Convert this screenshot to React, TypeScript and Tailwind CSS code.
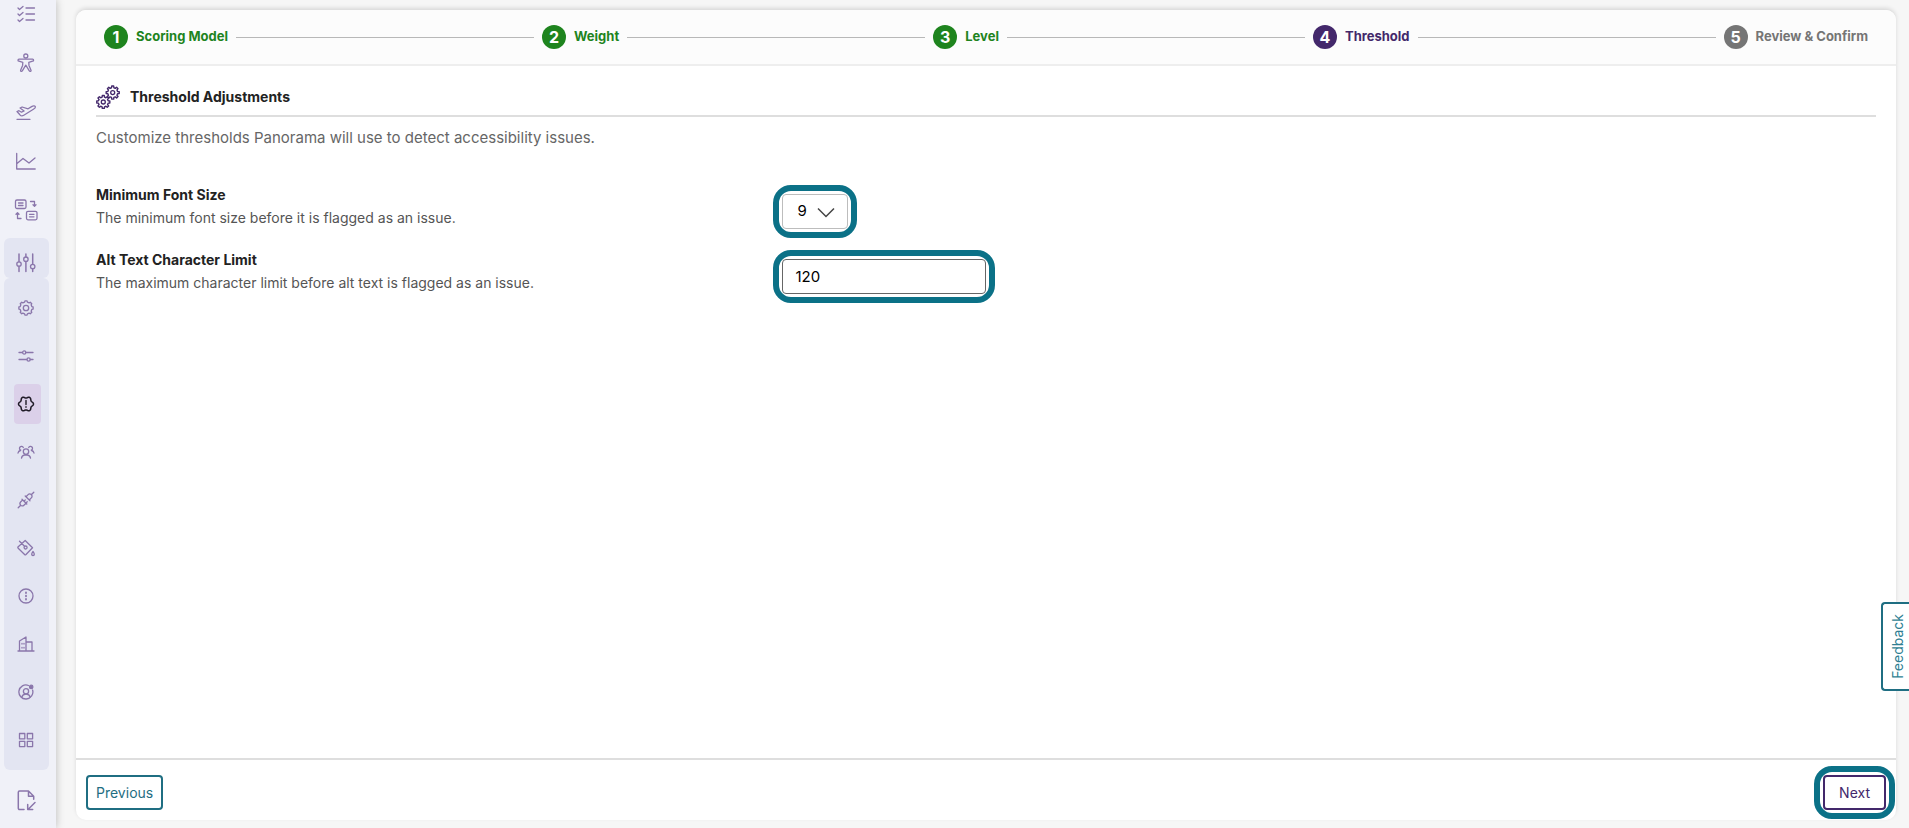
import React, { useState } from 'react';
import clsx from 'clsx';

interface IconProps {
  className?: string;
}

const Icon: React.FC<{ size: number; children: React.ReactNode; className?: string }> = ({ size, children, className }) => (
  <svg
    width={size}
    height={size}
    viewBox={`0 0 ${size} ${size}`}
    fill="none"
    stroke="currentColor"
    strokeWidth={1.3}
    strokeLinecap="round"
    strokeLinejoin="round"
    className={className}
    aria-hidden="true"
  >
    {children}
  </svg>
);

// cog outline with square teeth around (cx, cy)
const cogPath = (cx: number, cy: number, outer: number, inner: number, teeth = 8) => {
  const step = (Math.PI * 2) / teeth;
  const points: string[] = [];
  for (let i = 0; i < teeth; i++) {
    const a = i * step - Math.PI / 2;
    [
      [inner, -0.3],
      [outer, -0.19],
      [outer, 0.19],
      [inner, 0.3],
    ].forEach(([r, o]) => {
      points.push(`${(cx + r * Math.cos(a + o * step)).toFixed(2)} ${(cy + r * Math.sin(a + o * step)).toFixed(2)}`);
    });
  }
  return `M${points.join('L')}Z`;
};

// soft-lobed outline, first lobe pointing right
const lobePath = (c: number, radius: number, depth: number, lobes: number) => {
  const points: string[] = [];
  for (let deg = 0; deg < 360; deg += 5) {
    const a = (deg * Math.PI) / 180;
    const r = radius + depth * Math.cos(lobes * a);
    points.push(`${(c + r * Math.cos(a)).toFixed(2)} ${(c + r * Math.sin(a)).toFixed(2)}`);
  }
  return `M${points.join('L')}Z`;
};

const IconChecklist = () => (
  <Icon size={24}>
    <path d="M4 6l1.5 1.5L9 4.5M4 12l1.5 1.5L9 10.5M4 18l1.5 1.5L9 16.5M12 6h8.5M12 12h8.5M12 18h8.5" />
  </Icon>
);

const IconAccessibility = () => (
  <Icon size={24}>
    <circle cx="11.8" cy="5" r="2" />
    <path d="M9.5 8.200H5a1 1 0 0 0 0 2l3.800 1.200-.2 3-2 4.800c-.4 1.200 1.200 1.700 1.700.6l3.500-5.600 3.500 5.600c.5 1.100 2.100.6 1.700-.6l-2-4.800-.2-3 3.800-1.200a1 1 0 0 0 0-2z" />
  </Icon>
);

const IconPlane = () => (
  <Icon size={24}>
    <path d="M3 19.300h13M3 11.500l2-.8 2.500 1.500 2.600-1.200-4-3 2-1 6 1.800 3.500-2.200c2-1.200 3.600-.7 3.800.2.200 1-.7 1.700-2 2.500l-9.600 6c-1.500.9-2.900.7-3.900-.5z" />
  </Icon>
);

const IconChart = () => (
  <Icon size={24}>
    <path d="M2.700 4.500V20h18.500M3 14.500l6-5 6 4.500 6-5" />
  </Icon>
);

const IconSwap = () => (
  <Icon size={24}>
    <rect x="1.500" y="2" width="10.500" height="8.500" rx="1.500" />
    <rect x="12.500" y="13.300" width="10.500" height="8.500" rx="1.500" />
    <path d="M4.500 5h4.500M4.500 7.500h4.500M15.500 16.300H20M15.500 18.800H20M16.500 3.500h4v4.500M19 6.800l1.500 1.500L22 6.800M7 20.500H3.500V15M2 16.300l1.500-1.500L5 16.300" />
  </Icon>
);

const IconSliders = () => (
  <Icon size={24}>
    <path d="M5 3v7.500M5 15.500V20.500M11.900 3v2.500M11.900 10.500v10M18.700 3v10M18.700 18v2.500" strokeWidth={1.5} />
    <circle cx="5" cy="13" r="2.200" />
    <circle cx="11.900" cy="8.200" r="2.200" />
    <circle cx="18.700" cy="15.500" r="2.200" />
  </Icon>
);

const IconGear = () => (
  <Icon size={16}>
    <path d={cogPath(8, 8, 7.2, 6)} />
    <circle cx="8" cy="8" r="2.700" />
  </Icon>
);

const IconTune = () => (
  <Icon size={16}>
    <path d="M1 4.500h3.500M7.800 4.500H15M1 11.500h7.800M12.300 11.500H15" />
    <circle cx="6.200" cy="4.500" r="1.600" />
    <circle cx="10.600" cy="11.500" r="1.600" />
  </Icon>
);

const IconBadgeAlert = () => (
  <Icon size={18}>
    <path d={lobePath(9, 6.7, 0.8, 6)} strokeWidth={1.5} />
    <path d="M9 5.500v4M9 11.800v.4" strokeWidth={1.4} />
  </Icon>
);

const IconUsers = () => (
  <Icon size={18}>
    <circle cx="9" cy="8.600" r="2.700" />
    <path d="M4.500 15.200c.3-2 1.500-3 3-3.200h3c1.500.2 2.700 1.200 3 3.200M6.300 4.500a2 2 0 1 0-2.600 2.700M3.500 7.500C2 7.800 1.200 8.800 1 10M11.700 4.500a2 2 0 1 1 2.600 2.700M14.500 7.500c1.500.3 2.300 1.300 2.500 2.500" />
  </Icon>
);

const IconPlug = () => (
  <Icon size={18}>
    <path d="M1.200 16.800l2.500-2.500M16.800 1.200l-2.500 2.500M5 8.200l4.800 4.800M8.200 5l4.800 4.800M5.700 8.900L3.600 11c-1 1-.8 2.200 0 3.200s2.300 1 3.300 0L9 12.300M9 5.700l2.100-2.100c1-1 2.200-.8 3.200 0s1 2.300 0 3.300L12.300 9M7 10.200l1.300-1.300M9 12l1.200-1.200" />
  </Icon>
);

const IconPaint = () => (
  <Icon size={18}>
    <path d="M8.200 1.500l7.300 7.200-6.500 6.800a1 1 0 0 1-1.400 0L1.200 9.200a1 1 0 0 1 0-1.400zM2.500 2.300l5 5" />
    <circle cx="8.600" cy="8.500" r="1.500" />
    <path d="M16 12.500c-.8 1.200-1.300 1.900-1.300 2.700a1.300 1.300 0 0 0 2.600 0c0-.8-.5-1.500-1.300-2.700z" />
  </Icon>
);

const IconInfo = () => (
  <Icon size={16}>
    <circle cx="8" cy="8" r="7" />
    <path d="M8 4.500v.6M8 7.700v.6M8 10.900v.6" strokeWidth={1.8} />
  </Icon>
);

const IconBuilding = () => (
  <Icon size={18}>
    <path d="M1 16h16M2.500 16V6l6.500-4v14M9 7h6v9M5 8.500v.5M7 8.500v.5M5 12.500v.5M7 12.500v.5" />
  </Icon>
);

const IconUserCircle = () => (
  <Icon size={16}>
    <path d="M10.500 1.500A7 7 0 1 0 14.600 6" />
    <circle cx="8" cy="7.200" r="2.600" />
    <path d="M3.700 13.200c.6-2 2.200-3 4.300-3s3.700 1 4.300 3" />
    <circle cx="13.200" cy="2.900" r="1.700" fill="currentColor" />
  </Icon>
);

const IconGrid = () => (
  <Icon size={16}>
    <rect x="1.500" y="1.500" width="5.300" height="5.300" />
    <rect x="9.300" y="1.500" width="5.300" height="5.300" />
    <rect x="1.500" y="9.300" width="5.300" height="5.300" />
    <rect x="9.300" y="9.300" width="5.300" height="5.300" />
  </Icon>
);

const IconFileImport = () => (
  <Icon size={24}>
    <path d="M10 21.500H5.500a1.200 1.200 0 0 1-1.200-1.200V4.200A1.200 1.200 0 0 1 5.500 3h9l5.200 5.200v3M14.500 3v5.200h5.200M21 14.500l-7 7M13.700 16.500v5h5" strokeWidth={1.5} />
  </Icon>
);

const IconGears = ({ className }: IconProps) => (
  <Icon size={24} className={className}>
    <path d={cogPath(16.7, 7.6, 6.6, 5)} strokeWidth={1.4} />
    <circle cx="16.700" cy="7.600" r="2" />
    <path d={cogPath(7.3, 17, 6.6, 5)} strokeWidth={1.4} />
    <circle cx="7.300" cy="17" r="2" />
  </Icon>
);

const mainLinks = [
  { label: 'Checklist', icon: IconChecklist },
  { label: 'Accessibility', icon: IconAccessibility },
  { label: 'Launch', icon: IconPlane },
  { label: 'Reports', icon: IconChart },
  { label: 'Transfers', icon: IconSwap },
];

const settingsLinks = [
  { label: 'General', icon: IconGear },
  { label: 'Options', icon: IconTune },
  { label: 'Issue rules', icon: IconBadgeAlert, active: true },
  { label: 'Users', icon: IconUsers },
  { label: 'Integrations', icon: IconPlug },
  { label: 'Branding', icon: IconPaint },
  { label: 'Information', icon: IconInfo },
  { label: 'Organization', icon: IconBuilding },
  { label: 'Account', icon: IconUserCircle },
  { label: 'Apps', icon: IconGrid },
];

const Sidebar: React.FC = () => (
  <nav
    aria-label="Main"
    className="w-14 shrink-0 flex flex-col justify-end overflow-hidden bg-[#f0f1f8] text-[#8a76ab] shadow-[0_0_8px_rgba(0,0,0,0.25)] pl-1 pr-[7px]"
  >
    {mainLinks.map(({ label, icon: LinkIcon }) => (
      <a key={label} href="#" aria-label={label} className="h-[49px] shrink-0 flex items-center justify-center pr-px">
        <LinkIcon />
      </a>
    ))}
    <a href="#" aria-label="Settings" className="mt-1 h-10 shrink-0 flex items-center justify-center rounded-md bg-[#e3e5f2] pt-[10px] pr-px">
      <IconSliders />
    </a>
    <div className="shrink-0 flex flex-col items-center gap-2 rounded-md bg-[#e3e5f2] py-[10px] pl-[2px]">
      {settingsLinks.map(({ label, icon: LinkIcon, active }) => (
        <a
          key={label}
          href="#"
          aria-label={label}
          className={clsx('w-[27px] h-10 flex items-center justify-center rounded pr-[3px]', active && 'bg-[#dbd0e9] text-[#1f1a26]')}
        >
          <LinkIcon />
        </a>
      ))}
    </div>
    <a href="#" aria-label="Import" className="h-[58px] shrink-0 flex items-center justify-center pt-[2px] pr-px">
      <IconFileImport />
    </a>
  </nav>
);

const steps = [
  { label: 'Scoring Model', state: 'done' },
  { label: 'Weight', state: 'done' },
  { label: 'Level', state: 'done' },
  { label: 'Threshold', state: 'current' },
  { label: 'Review & Confirm', state: 'todo' },
];

const Stepper: React.FC = () => (
  <ol className="flex items-center gap-2 h-14 px-7 bg-[#fcfcfc] border-b-2 border-[#eeeeee] rounded-t-[10px]">
    {steps.map((step, i) => (
      <React.Fragment key={step.label}>
        {i > 0 && <li aria-hidden="true" className="flex-1 h-px bg-[#b8b8b8]" />}
        <li
          className={clsx(
            'flex items-center gap-2 text-[13px] font-bold',
            step.state === 'done' && 'text-[#1e841e]',
            step.state === 'current' && 'text-[#43286b]',
            step.state === 'todo' && 'text-[#757575]',
          )}
        >
          <span
            className={clsx(
              'size-6 rounded-full flex items-center justify-center text-base font-bold text-white',
              step.state === 'done' && 'bg-[#1e841e]',
              step.state === 'current' && 'bg-[#43286b]',
              step.state === 'todo' && 'bg-[#757575]',
            )}
          >
            {i + 1}
          </span>
          {step.label}
        </li>
      </React.Fragment>
    ))}
  </ol>
);

const Highlight: React.FC<{ children: React.ReactNode }> = ({ children }) => (
  <div className="w-fit border-[6px] border-[#0b7187] rounded-[18px] p-[3px]">{children}</div>
);

interface SettingRowProps {
  id: string;
  title: string;
  description: string;
  children: React.ReactNode;
}

const SettingRow: React.FC<SettingRowProps> = ({ id, title, description, children }) => (
  <div className="flex items-start gap-px">
    <div className="w-[38%] flex flex-col gap-[3px]">
      <label htmlFor={id} className="text-sm font-bold text-[#222222]">
        {title}
      </label>
      <p className="text-sm text-[#555555]">{description}</p>
    </div>
    <Highlight>{children}</Highlight>
  </div>
);

export default function App() {
  const [fontSize, setFontSize] = useState('9');
  const [charLimit, setCharLimit] = useState('120');

  return (
    <div className="flex h-screen overflow-hidden bg-[#f6f6f6] font-['Inter',sans-serif]">
      <Sidebar />
      <main className="flex-1 flex flex-col ml-5 mr-[13px] mt-[10px] mb-2 bg-white rounded-[10px] shadow-[0_-2px_4px_rgba(0,0,0,0.12)]">
        <Stepper />
        <section className="flex-1 px-5 pt-4">
          <header className="flex items-center gap-[10px] h-[35px] pb-1 border-b-2 border-[#dedede]">
            <IconGears className="text-[#43286b]" />
            <h1 className="text-sm font-bold text-[#222222]">Threshold Adjustments</h1>
          </header>
          <p className="mt-[9px] text-[15px] leading-6 text-[#666666]">
            Customize thresholds Panorama will use to detect accessibility issues.
          </p>
          <div className="mt-[35px] flex flex-col gap-3">
            <SettingRow id="font-size" title="Minimum Font Size" description="The minimum font size before it is flagged as an issue.">
              <div className="relative">
                <select
                  id="font-size"
                  value={fontSize}
                  onChange={(e) => setFontSize(e.target.value)}
                  className="block appearance-none w-[66px] h-[35px] pl-[14px] rounded border border-[#bdbdbd] bg-white text-[15px] text-black"
                >
                  {['8', '9', '10', '11', '12'].map((size) => (
                    <option key={size}>{size}</option>
                  ))}
                </select>
                <svg
                  className="absolute right-[13px] top-[13px] pointer-events-none"
                  width="18"
                  height="11"
                  viewBox="0 0 18 11"
                  fill="none"
                  stroke="#444444"
                  strokeWidth="1.5"
                  aria-hidden="true"
                >
                  <path d="M1 1.500l8 8 8-8" />
                </svg>
              </div>
            </SettingRow>
            <SettingRow id="char-limit" title="Alt Text Character Limit" description="The maximum character limit before alt text is flagged as an issue.">
              <input
                id="char-limit"
                type="text"
                value={charLimit}
                onChange={(e) => setCharLimit(e.target.value)}
                className="block w-[204px] h-[35px] px-3 rounded border border-[#666666] bg-white text-[15px] text-black"
              />
            </SettingRow>
          </div>
        </section>
        <footer className="flex items-center justify-between h-[62px] pt-[5px] pl-[10px] pr-px border-t-2 border-[#dedede]">
          <button type="button" className="h-[35px] px-2 rounded border-2 border-[#1f6e82] bg-white text-sm text-[#1f6e82]">
            Previous
          </button>
          <Highlight>
            <button type="button" className="block h-[35px] px-[14px] rounded border-2 border-[#43286b] bg-white text-sm text-[#43286b]">
              Next
            </button>
          </Highlight>
        </footer>
      </main>
      <button
        type="button"
        className="fixed right-0 bottom-[137px] h-[89px] w-7 pl-1 flex items-center justify-center rounded-l border-2 border-r-0 border-[#1f6e82] bg-white text-sm text-[#2f7f93]"
      >
        <span className="rotate-180 [writing-mode:vertical-rl]">Feedback</span>
      </button>
    </div>
  );
}
